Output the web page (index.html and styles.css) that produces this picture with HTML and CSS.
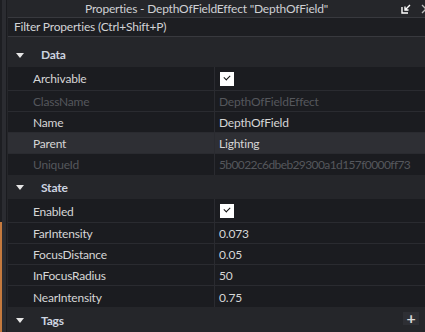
FILE: index.html
```html
<!DOCTYPE html>
<html lang="en">
<head>
    <meta charset="UTF-8">
    <title>Properties</title>
    <link rel="stylesheet" href="styles.css">
</head>
<body>
    <div class="app">
        <!-- Leva traka dock-a -->
        <div class="dock-edge">
            <div class="dock-accent"></div>
        </div>

        <div class="panel">
            <div class="title-bar">
                <span class="title">Properties - DepthOfFieldEffect "DepthOfField"</span>
                <svg class="undock" width="10" height="10" viewBox="0 0 10 10">
                    <path d="M1 3 V9 H7" fill="none" stroke="#fff" stroke-width="1.4"/>
                    <path d="M9 1 L4 6 M4 2.5 V6 H7.5" fill="none" stroke="#fff" stroke-width="1.4"/>
                </svg>
                <svg class="chev" width="6" height="10" viewBox="0 0 6 10">
                    <path d="M1 1 L5 5 L1 9" fill="none" stroke="#bbb" stroke-width="1.3"/>
                </svg>
            </div>

            <div class="filter">Filter Properties (Ctrl+Shift+P)</div>

            <div class="section-header"><span class="arrow"></span>Data</div>
            <div class="rows">
                <div class="row tall"><div class="name">Archivable</div><div class="value"><span class="check"></span></div></div>
                <div class="row disabled"><div class="name">ClassName</div><div class="value">DepthOfFieldEffect</div></div>
                <div class="row"><div class="name">Name</div><div class="value">DepthOfField</div></div>
                <div class="row hover"><div class="name">Parent</div><div class="value">Lighting</div></div>
                <div class="row disabled"><div class="name">UniqueId</div><div class="value id">5b0022c6dbeb29300a1d157f0000ff73</div></div>
            </div>

            <div class="section-header"><span class="arrow"></span>State</div>
            <div class="rows">
                <div class="row tall"><div class="name">Enabled</div><div class="value"><span class="check"></span></div></div>
                <div class="row"><div class="name">FarIntensity</div><div class="value">0.073</div></div>
                <div class="row"><div class="name">FocusDistance</div><div class="value">0.05</div></div>
                <div class="row"><div class="name">InFocusRadius</div><div class="value">50</div></div>
                <div class="row"><div class="name">NearIntensity</div><div class="value">0.75</div></div>
            </div>

            <div class="section-header"><span class="arrow"></span>Tags<span class="add-tag">+</span></div>
        </div>
    </div>
</body>
</html>
```

FILE: styles.css
```css
body {
    margin: 0;
    padding: 0;
    background: #25262a;
    font-family: Lato, "Open Sans", sans-serif;
    font-size: 12px;
    letter-spacing: -0.2px;
    color: #d6d6d6;
    overflow: hidden;
}

.app {
    display: flex;
    height: 332px;
    width: 425px;
}

/* Leva ivica */
.dock-edge {
    width: 7px;
    flex: none;
    border-left: 2px solid #1d1e22;
    border-right: 1px solid #1a1b1f;
    background: #2b2c31;
    box-sizing: border-box;
    position: relative;
}

.dock-accent {
    position: absolute;
    left: -2px;
    bottom: 0;
    width: 2px;
    height: 110px;
    background: #c57a3e;
}

.panel {
    flex: 1;
    min-width: 0;
    display: flex;
    flex-direction: column;
    background: #25262a;
    margin-left: 1px;
}

.title-bar {
    height: 17px;
    display: flex;
    align-items: center;
    justify-content: center;
    position: relative;
    color: #cfd0d4;
    font-size: 12px;
}

.title {
    margin-left: -20px;
    margin-top: 1px;
}

.undock {
    position: absolute;
    right: 14px;
    top: 4px;
}

.chev {
    position: absolute;
    right: -2px;
    top: 4px;
}

.filter {
    height: 18px;
    line-height: 18px;
    border-top: 1px solid #38393e;
    border-bottom: 1px solid #38393e;
    background: #1d1e22;
    padding-left: 6px;
    color: #d2d3d6;
}

.section-header {
    height: 25px;
    display: flex;
    align-items: center;
    font-weight: bold;
    color: #cdd4e0;
    padding-left: 8px;
    position: relative;
    padding-top: 1px;
    box-sizing: border-box;
}

.filter + .section-header {
    margin-top: 5px;
}

.arrow {
    width: 0;
    height: 0;
    border-left: 4px solid transparent;
    border-right: 4px solid transparent;
    border-top: 5px solid #e6e6e6;
    margin-right: 17px;
    margin-top: 1px;
}

.add-tag {
    position: absolute;
    right: 6px;
    top: 5px;
    width: 16px;
    height: 13px;
    background: #2e2f34;
    color: #d8d8d8;
    font-size: 16px;
    line-height: 12px;
    text-align: center;
}

.rows {
    background: #1b1c20;
}

.row {
    display: grid;
    grid-template-columns: 207px minmax(0, 1fr);
    height: 20px;
    border-bottom: 1px solid #2a2b30;
}

.row.tall {
    height: 23px;
}

.row:last-child {
    border-bottom: none;
    height: 21px;
}

.row.hover {
    background: #2e2f34;
}

.name {
    padding-left: 25px;
    border-right: 1px solid #2a2b30;
    display: flex;
    align-items: center;
    padding-top: 1px;
}

.value {
    padding-left: 4px;
    display: flex;
    align-items: center;
    white-space: nowrap;
    overflow: hidden;
    padding-top: 1px;
}

.value.id {
    letter-spacing: -0.6px;
}

.disabled {
    color: #55575c;
}

.check {
    width: 14px;
    height: 14px;
    background: #fff;
    position: relative;
    margin-left: 1px;
}

.check::after {
    content: "";
    position: absolute;
    left: 4px;
    top: 3px;
    width: 5px;
    height: 3px;
    border-left: 1.5px solid #111;
    border-bottom: 1.5px solid #111;
    transform: rotate(-45deg);
}
```
